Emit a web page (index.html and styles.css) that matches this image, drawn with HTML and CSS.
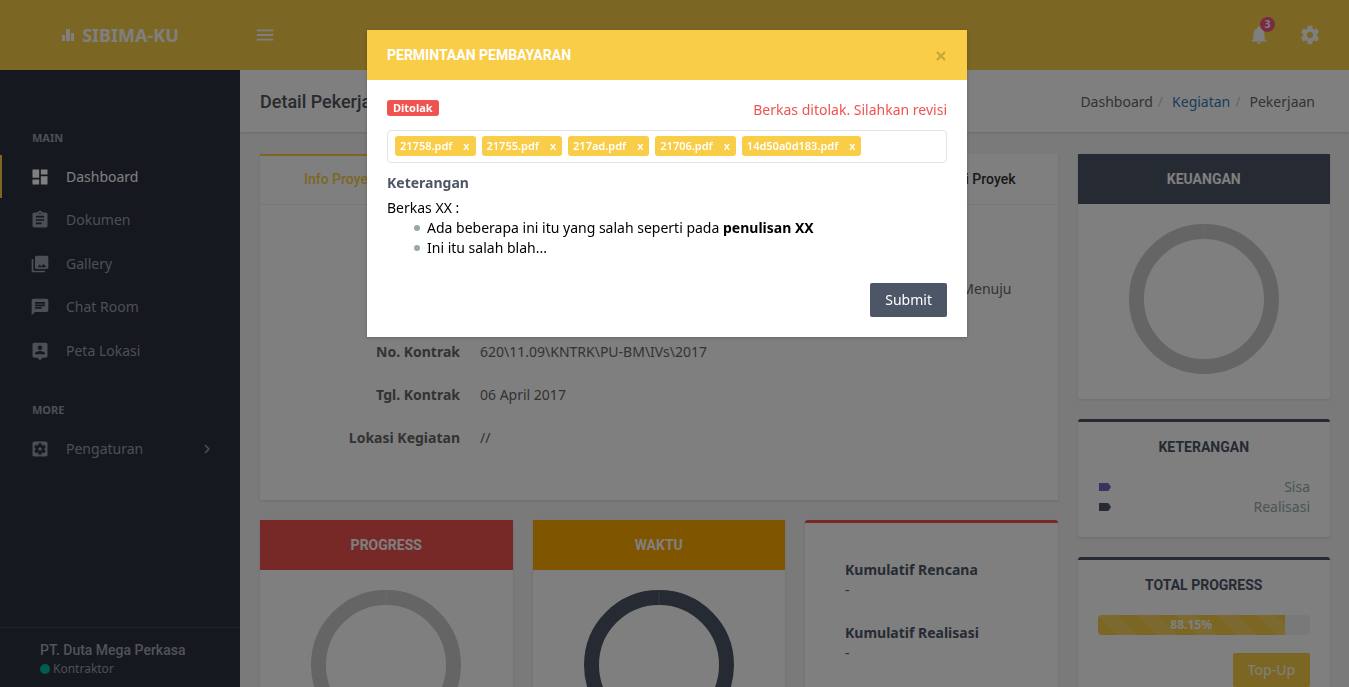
FILE: index.html
```html
<!DOCTYPE html>
<html lang="id">
<head>
<meta charset="utf-8">
<title>SIBIMA-KU</title>
<meta name="viewport" content="width=device-width, initial-scale=1">
<link rel="stylesheet" href="styles.css">
</head>
<body>
<header class="topbar">
  <a class="brand" href="#">
    <svg class="brand-icon" viewBox="0 0 14 14" aria-hidden="true"><path d="M1 7h3v6H1zM5 1h4v12H5zM10 5h3v8h-3z"/></svg>
    <span>SIBIMA-KU</span>
  </a>
  <button class="icon-button menu-button" type="button" aria-label="Menu">
    <svg viewBox="0 0 24 24"><path d="M3 18h18v-2H3v2zm0-5h18v-2H3v2zm0-7v2h18V6H3z"/></svg>
  </button>
  <div class="topbar-actions">
    <button class="icon-button" type="button" aria-label="Notifikasi">
      <svg viewBox="0 0 24 24"><path d="M12 22c1.1 0 2-.9 2-2h-4c0 1.1.89 2 2 2zm6-6v-5c0-3.07-1.64-5.64-4.5-6.32V4c0-.83-.67-1.5-1.5-1.5s-1.5.67-1.5 1.5v.68C7.63 5.36 6 7.92 6 11v5l-2 2v1h16v-1l-2-2z"/></svg>
      <span class="badge">3</span>
    </button>
    <button class="icon-button" type="button" aria-label="Setelan">
      <svg viewBox="0 0 24 24"><path d="M19.43 12.98c.04-.32.07-.64.07-.98s-.03-.66-.07-.98l2.11-1.65c.19-.15.24-.42.12-.64l-2-3.46c-.12-.22-.39-.3-.61-.22l-2.49 1c-.52-.4-1.08-.73-1.69-.98l-.38-2.65C14.46 2.18 14.25 2 14 2h-4c-.25 0-.46.18-.49.42l-.38 2.65c-.61.25-1.17.59-1.69.98l-2.49-1c-.23-.09-.49 0-.61.22l-2 3.46c-.13.22-.07.49.12.64l2.11 1.65c-.04.32-.07.65-.07.98s.03.66.07.98l-2.11 1.65c-.19.15-.24.42-.12.64l2 3.46c.12.22.39.3.61.22l2.49-1c.52.4 1.08.73 1.69.98l.38 2.65c.03.24.24.42.49.42h4c.25 0 .46-.18.49-.42l.38-2.65c.61-.25 1.17-.59 1.69-.98l2.49 1c.23.09.49 0 .61-.22l2-3.46c.12-.22.07-.49-.12-.64l-2.11-1.65zM12 15.5c-1.93 0-3.5-1.57-3.5-3.5s1.57-3.5 3.5-3.5 3.5 1.57 3.5 3.5-1.57 3.5-3.5 3.5z"/></svg>
    </button>
  </div>
</header>

<div class="shell">
  <aside class="sidebar">
    <nav class="nav">
      <h2 class="nav-title">MAIN</h2>
      <ul class="nav-list nav-list-main">
        <li><a class="nav-link active" href="#"><svg viewBox="0 0 24 24"><path d="M3 13h8V3H3v10zm0 8h8v-6H3v6zm10 0h8V11h-8v10zm0-18v6h8V3h-8z"/></svg><span>Dashboard</span></a></li>
        <li><a class="nav-link" href="#"><svg viewBox="0 0 24 24"><path d="M19 3h-4.18C14.4 1.84 13.3 1 12 1c-1.3 0-2.4.84-2.82 2H5c-1.1 0-2 .9-2 2v14c0 1.1.9 2 2 2h14c1.1 0 2-.9 2-2V5c0-1.1-.9-2-2-2zm-7 0c.55 0 1 .45 1 1s-.45 1-1 1-1-.45-1-1 .45-1 1-1zm2 14H7v-2h7v2zm3-4H7v-2h10v2zm0-4H7V7h10v2z"/></svg><span>Dokumen</span></a></li>
        <li><a class="nav-link" href="#"><svg viewBox="0 0 24 24"><path d="M22 16V4c0-1.1-.9-2-2-2H8c-1.1 0-2 .9-2 2v12c0 1.1.9 2 2 2h12c1.1 0 2-.9 2-2zM9 16l2.800-3.500 2 2.500 2.400-3L20 16zM2 6v14c0 1.100.9 2 2 2h14v-2H4V6H2z"/></svg><span>Gallery</span></a></li>
        <li><a class="nav-link" href="#"><svg viewBox="0 0 24 24"><path d="M20 2H4c-1.100 0-1.990.9-1.990 2L2 22l4-4h14c1.100 0 2-.9 2-2V4c0-1.100-.9-2-2-2zM6 9h12v2H6V9zm8 5H6v-2h8v2zm4-6H6V6h12v2z"/></svg><span>Chat Room</span></a></li>
        <li><a class="nav-link" href="#"><svg viewBox="0 0 24 24"><path d="M19 2H5c-1.110 0-2 .9-2 2v14c0 1.100.89 2 2 2h4l3 3 3-3h4c1.100 0 2-.9 2-2V4c0-1.100-.9-2-2-2zm-7 3.300c1.490 0 2.700 1.210 2.700 2.700 0 1.490-1.210 2.700-2.700 2.700-1.490 0-2.700-1.210-2.700-2.700 0-1.490 1.210-2.700 2.700-2.700zM18 16H6v-.9c0-2 4-3.100 6-3.100s6 1.100 6 3.100v.9z"/></svg><span>Peta Lokasi</span></a></li>
      </ul>
      <h2 class="nav-title">MORE</h2>
      <ul class="nav-list">
        <li><a class="nav-link" href="#"><svg viewBox="0 0 24 24"><path d="M12 10c-1.1 0-2 .9-2 2s.9 2 2 2 2-.9 2-2-.9-2-2-2zm7-7H5c-1.11 0-2 .9-2 2v14c0 1.1.89 2 2 2h14c1.11 0 2-.9 2-2V5c0-1.1-.89-2-2-2zm-1.750 9c0 .23-.02.46-.05.68l1.480 1.160c.13.11.17.3.08.45l-1.400 2.420c-.09.15-.27.21-.43.15l-1.740-.7c-.36.28-.76.51-1.180.69l-.26 1.850c-.03.17-.18.3-.35.3h-2.800c-.17 0-.32-.13-.35-.29l-.26-1.850c-.43-.18-.82-.41-1.180-.69l-1.740.7c-.16.06-.34 0-.43-.15l-1.400-2.420c-.09-.15-.05-.34.08-.45l1.480-1.160c-.03-.23-.05-.46-.05-.69 0-.23.02-.46.05-.68l-1.480-1.160c-.13-.11-.17-.3-.08-.45l1.400-2.420c.09-.15.27-.21.43-.15l1.740.7c.36-.28.76-.51 1.180-.69l.26-1.850c.03-.17.18-.3.35-.3h2.800c.17 0 .32.13.35.29l.26 1.850c.43.18.82.41 1.180.69l1.740-.7c.16-.06.34 0 .43.15l1.400 2.420c.09.15.05.34-.08.45l-1.480 1.160c.03.23.05.46.05.69z"/></svg><span>Pengaturan</span><svg class="chevron" viewBox="0 0 24 24"><path d="M8.590 16.590L13.170 12 8.590 7.410 10 6l6 6-6 6z"/></svg></a></li>
      </ul>
    </nav>
    <div class="profile">
      <strong class="profile-name">PT. Duta Mega Perkasa</strong>
      <span class="profile-role"><i class="dot"></i>Kontraktor</span>
    </div>
  </aside>

  <main class="main">
    <div class="page-title">
      <h1>Detail Pekerjaan</h1>
      <ol class="breadcrumb">
        <li>Dashboard</li>
        <li><a href="#">Kegiatan</a></li>
        <li>Pekerjaan</li>
      </ol>
    </div>

    <div class="dashboard">
      <div class="column-wide">
        <section class="card info-card">
          <div class="tabs">
            <a class="tab active" href="#">Info Proyek</a>
            <a class="tab" href="#">Lokasi Proyek</a>
          </div>
          <dl class="details">
            <dt></dt><dd class="wrapped">Menuju</dd>
            <dt>No. Kontrak</dt><dd>620\11.09\KNTRK\PU-BM\IVs\2017</dd>
            <dt>Tgl. Kontrak</dt><dd>06 April 2017</dd>
            <dt>Lokasi Kegiatan</dt><dd>//</dd>
          </dl>
        </section>
        <div class="trio">
          <section class="card">
            <h3 class="card-head red">PROGRESS</h3>
            <div class="chart"><svg class="ring" viewBox="0 0 150 150"><circle cx="75" cy="75" r="67.500"/><path d="M75 0v15"/></svg></div>
          </section>
          <section class="card">
            <h3 class="card-head orange">WAKTU</h3>
            <div class="chart"><svg class="ring ring-dark" viewBox="0 0 150 150"><circle cx="75" cy="75" r="67.500"/><path d="M75 0v15"/></svg></div>
          </section>
          <section class="card edge edge-red cumulative">
            <h4>Kumulatif Rencana</h4>
            <p>-</p>
            <h4>Kumulatif Realisasi</h4>
            <p>-</p>
          </section>
        </div>
      </div>
      <div class="column-side">
        <section class="card">
          <h3 class="card-head slate">KEUANGAN</h3>
          <div class="chart"><svg class="ring" viewBox="0 0 150 150"><circle cx="75" cy="75" r="67.500"/><path d="M75 0v15"/></svg></div>
        </section>
        <section class="card edge">
          <h3 class="card-title">KETERANGAN</h3>
          <ul class="legend">
            <li><svg class="tag purple" viewBox="0 0 12 8"><path d="M0 0h8.500a2 2 0 0 1 1.500.7L12 4l-2 3.300a2 2 0 0 1-1.500.7H0z"/></svg><span>Sisa</span></li>
            <li><svg class="tag" viewBox="0 0 12 8"><path d="M0 0h8.500a2 2 0 0 1 1.500.7L12 4l-2 3.300a2 2 0 0 1-1.500.7H0z"/></svg><span>Realisasi</span></li>
          </ul>
        </section>
        <section class="card edge">
          <h3 class="card-title">TOTAL PROGRESS</h3>
          <div class="total">
            <div class="progress"><div class="progress-fill" style="width:88.15%">88.15%</div></div>
            <button class="button yellow" type="button">Top-Up</button>
          </div>
        </section>
      </div>
    </div>
  </main>
</div>

<div class="overlay">
  <div class="modal" role="dialog" aria-modal="true" aria-labelledby="modal-title">
    <div class="modal-head">
      <h2 id="modal-title">PERMINTAAN PEMBAYARAN</h2>
      <button class="close" type="button" aria-label="Tutup"><svg viewBox="0 0 10 10"><path d="M1 1l8 8M9 1L1 9"/></svg></button>
    </div>
    <div class="modal-body">
      <div class="status">
        <span class="label">Ditolak</span>
        <span class="status-text">Berkas ditolak. Silahkan revisi</span>
      </div>
      <ul class="files">
        <li>21758.pdf<button type="button" aria-label="Hapus 21758.pdf">x</button></li>
        <li>21755.pdf<button type="button" aria-label="Hapus 21755.pdf">x</button></li>
        <li>217ad.pdf<button type="button" aria-label="Hapus 217ad.pdf">x</button></li>
        <li>21706.pdf<button type="button" aria-label="Hapus 21706.pdf">x</button></li>
        <li>14d50a0d183.pdf<button type="button" aria-label="Hapus 14d50a0d183.pdf">x</button></li>
      </ul>
      <h3 class="note-title">Keterangan</h3>
      <div class="note">
        <p>Berkas XX :</p>
        <ul>
          <li>Ada beberapa ini itu yang salah seperti pada <b>penulisan XX</b></li>
          <li>Ini itu salah blah...</li>
        </ul>
      </div>
      <div class="modal-actions"><button class="button slate" type="button">Submit</button></div>
    </div>
  </div>
</div>
</body>
</html>
```

FILE: styles.css
```css
* { box-sizing: border-box; }
html, body { height: 100%; }
body {
  margin: 0;
  display: flex;
  flex-direction: column;
  overflow: hidden;
  background: #f5f5f5;
  color: #666;
  font: 14px/20px "Noto Sans", "Open Sans", sans-serif;
}
h1, h2, h3, h4, p, ul, ol, dl, dd { margin: 0; padding: 0; }
ul, ol { list-style: none; }
a { color: inherit; text-decoration: none; }
button { font: inherit; border: 0; margin: 0; cursor: pointer; }
svg { display: block; fill: currentColor; flex: none; }

.topbar {
  flex: none;
  display: flex;
  align-items: center;
  height: 70px;
  background: #f9cd48;
  color: #fff;
}
.brand {
  width: 240px;
  display: flex;
  justify-content: center;
  align-items: center;
  gap: 7px;
  font-size: 18px;
  font-weight: 700;
}
.brand-icon { width: 14px; height: 14px; }
.icon-button {
  position: relative;
  padding: 0;
  background: none;
  color: inherit;
}
.icon-button svg { width: 22px; height: 22px; }
.menu-button { margin-left: 14px; }
.topbar-actions {
  margin-left: auto;
  padding-right: 28px;
  display: flex;
  gap: 29px;
}
.badge {
  position: absolute;
  top: -7px;
  right: -5px;
  width: 15px;
  height: 15px;
  border-radius: 50%;
  background: #f7548c;
  font-size: 10px;
  line-height: 15px;
  font-weight: 700;
  text-align: center;
}

.shell { flex: 1; min-height: 0; display: flex; }
.sidebar {
  flex: none;
  width: 240px;
  display: flex;
  flex-direction: column;
  background: #2b303f;
  color: #98a0a8;
}
.nav { flex: 1; padding-top: 58px; }
.nav-title {
  padding-left: 32px;
  margin-bottom: 7px;
  font-size: 11px;
  line-height: 20px;
}
.nav-list { margin-bottom: 27px; }
.nav-list-main { display: grid; grid-auto-rows: 1fr; height: 218px; }
.nav-link {
  display: flex;
  align-items: center;
  height: 43px;
  padding: 0 24px 0 28px;
  border-left: 2px solid transparent;
}
.nav-link.active { border-color: #f9cd48; color: #fff; }
.nav-link svg { width: 20px; height: 20px; margin-right: 16px; }
.nav-link .chevron { width: 18px; height: 18px; margin: 0 0 0 auto; }
.profile {
  display: flex;
  flex-direction: column;
  height: 60px;
  padding: 12px 40px 0;
  border-top: 1px solid #474d5a;
}
.profile-name { font: 500 14px/20px Roboto, sans-serif; color: #a0a8b0; }
.profile-role { display: flex; align-items: center; gap: 3px; font-size: 12px; line-height: 18px; }
.dot { width: 10px; height: 10px; border-radius: 50%; background: #00b89c; }

.main { flex: 1; min-width: 0; overflow: hidden; }
.page-title {
  display: flex;
  align-items: center;
  justify-content: space-between;
  height: 62px;
  padding: 2px 34px 0 20px;
  background: #fff;
  box-shadow: 0 1px 2px rgba(0, 0, 0, .15);
}
.page-title h1 { font: 500 18px/24px Roboto, sans-serif; color: #505458; }
.breadcrumb { display: flex; }
.breadcrumb li + li::before { content: "/"; padding: 0 9px 0 5px; color: #ccc; }
.breadcrumb a { color: #337ab7; }

.dashboard {
  display: grid;
  grid-template-columns: minmax(0, 1fr) calc((100% - 60px) / 4);
  gap: 20px;
  align-items: start;
  padding: 22px 19px 20px 20px;
}
.column-wide, .column-side { display: grid; gap: 20px; }
.trio { display: grid; grid-template-columns: repeat(3, 1fr); gap: 20px; }
.card { background: #fff; box-shadow: 0 1px 3px rgba(0, 0, 0, .12); }
.card-head {
  font: 700 14px/20px Roboto, sans-serif;
  padding: 15px 20px;
  color: #fff;
  text-align: center;
}
.red { background: #ef5350; }
.orange { background: #ffaa00; }
.slate { background: #4c5667; }
.yellow { background: #f9cd48; }
.chart { padding: 20px 20px 25px; }
.ring { width: 150px; height: 150px; margin: 0 auto; fill: none; stroke: #cacaca; }
.ring circle { stroke-width: 15; }
.ring path { stroke: #d8d8d8; stroke-width: 1; }
.ring-dark { stroke: #4c5667; }
.ring-dark path { stroke: #6c7482; }
.edge { border-top: 3px solid #4c5667; border-radius: 3px; }
.edge-red { border-color: #ef5350; }

.tabs {
  display: flex;
  justify-content: space-between;
  border-bottom: 1px solid #f0f0f0;
}
.tab {
  padding: 13px 42px 15px 44px;
  border-top: 2px solid transparent;
  font: 500 14px/20px Roboto, sans-serif;
  color: #333;
}
.tab.active { border-color: #f9cd48; color: #f9cd48; }
.details {
  display: grid;
  grid-template-columns: 200px 1fr;
  column-gap: 20px;
  padding: 74px 46px 29px 0;
}
.details dt { text-align: right; font-weight: 700; }
.details dd { padding-bottom: 23px; }
.details .wrapped { text-align: right; padding-bottom: 43px; }

.cumulative { padding: 37px 40px 20px; color: #4c5667; }
.cumulative h4 { font-size: 14px; }
.cumulative p { margin-bottom: 23px; }

.card-title {
  font: 700 14px/20px Roboto, sans-serif;
  padding: 15px 20px;
  color: #4c5667;
  text-align: center;
}
.legend { padding: 5px 20px 20px; color: #98a6ad; }
.legend li { display: flex; align-items: center; justify-content: space-between; }
.tag { width: 12px; height: 8px; margin-left: 1px; color: #4c5667; }
.tag.purple { color: #7266ba; }
.total {
  display: flex;
  flex-direction: column;
  align-items: flex-end;
  gap: 18px;
  padding: 5px 20px 20px;
}
.progress {
  width: 100%;
  border-radius: 4px;
  overflow: hidden;
  background: #f2f2f2;
}
.progress-fill {
  background: #f9cd48 repeating-linear-gradient(45deg, transparent 0 14px, rgba(255, 255, 255, .15) 14px 28px);
  color: #fff;
  font-size: 12px;
  font-weight: 700;
  line-height: 20px;
  text-align: center;
}
.button { padding: 7px 15px; border-radius: 2px; color: #fff; }

.overlay {
  position: fixed;
  inset: 0;
  display: flex;
  align-items: flex-start;
  justify-content: center;
  padding: 30px 15px 0 0;
  background: rgba(0, 0, 0, .5);
}
.modal {
  width: 600px;
  max-width: 100%;
  background: #fff;
  box-shadow: 0 1px 4px rgba(0, 0, 0, .2);
}
.modal-head {
  display: flex;
  align-items: center;
  justify-content: space-between;
  padding: 15px 20px;
  background: #f9cd48;
  color: #fff;
}
.modal-head h2 { font: 700 14px/20px Roboto, sans-serif; }
.close { padding: 2px 1px 0; background: none; color: #c8a53a; }
.close svg { width: 10px; height: 10px; stroke: currentColor; stroke-width: 2; fill: none; }
.modal-body { padding: 20px; }
.status { display: flex; align-items: flex-start; justify-content: space-between; }
.label {
  padding: 0 6px;
  border-radius: 3px;
  background: #ef5350;
  color: #fff;
  font-size: 11px;
  font-weight: 700;
  line-height: 16px;
}
.status-text { color: #ef5350; }
.files {
  display: flex;
  flex-wrap: wrap;
  gap: 6px;
  margin: 10px 0;
  padding: 5px 7px 6px;
  border: 1px solid #e3e3e3;
  border-radius: 4px;
}
.files li {
  display: flex;
  padding: 0 6px 0 5px;
  border-radius: 3px;
  background: #f9cd48;
  color: #fff;
  font-size: 11px;
  font-weight: 600;
  line-height: 20px;
}
.files button { padding: 0; margin-left: 11px; background: none; color: inherit; line-height: 20px; }
.note-title { margin-bottom: 5px; font-size: 14px; color: #4c5667; }
.note { color: #000; }
.note ul { padding-left: 27px; }
.note li { display: flex; align-items: center; white-space: pre-wrap; }
.note li::before {
  content: "";
  flex: none;
  width: 6px;
  height: 6px;
  margin-right: 7px;
  border-radius: 50%;
  background: #98a6ad;
}
.modal-actions { display: flex; justify-content: flex-end; padding-top: 25px; }
```
